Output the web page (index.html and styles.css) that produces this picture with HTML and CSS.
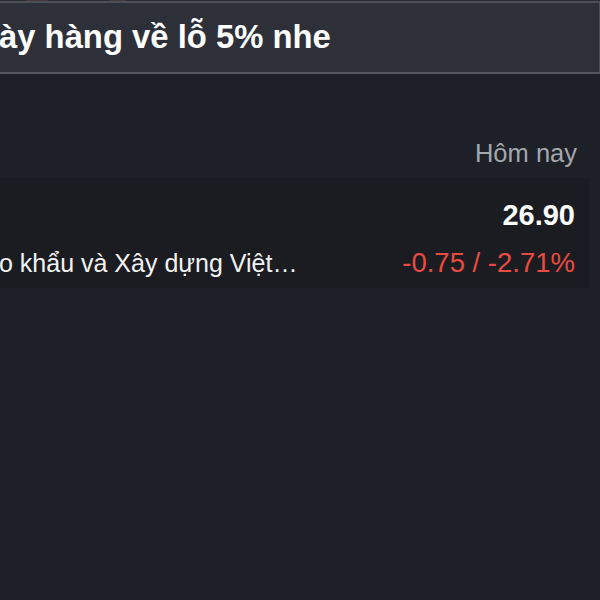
FILE: index.html
```html
<!DOCTYPE html>
<html lang="vi">
<head>
<meta charset="utf-8">
<link rel="stylesheet" href="styles.css">
</head>
<body>
  <div class="topstrip"><span class="mark mark-a"></span><span class="mark mark-b"></span></div>
  <header class="post-header">
    <h1 class="post-title">ày hàng về lỗ 5% nhe</h1>
  </header>
  <main class="content">
    <div class="col-label">Hôm nay</div>
    <div class="stock-row">
      <div class="line line-price">
        <span class="price">26.90</span>
      </div>
      <div class="line line-name">
        <span class="name">o khẩu và Xây dựng Việt…</span>
        <span class="change">-0.75 / -2.71%</span>
      </div>
    </div>
  </main>
</body>
</html>
```

FILE: styles.css
```css
html, body {
  margin: 0;
  padding: 0;
}
body {
  width: 600px;
  height: 600px;
  overflow: hidden;
  background: #1e2027;
  font-family: "Liberation Sans", Arial, sans-serif;
  color: #ffffff;
}
.topstrip {
  height: 1px;
  background: #2a2c33;
  display: flex;
}
.mark {
  display: block;
  height: 1px;
  background: #4a3538;
}
.mark-a { width: 22px; margin-left: 26px; }
.mark-b { width: 16px; margin-left: 62px; }
.post-header {
  height: 69px;
  background: #2d3039;
  border-top: 2px solid #4b4e56;
  border-bottom: 2px solid #53565e;
  border-right: 1px solid #4b4e56;
  display: flex;
  align-items: center;
}
.post-title {
  margin: -2px 0 0 -1px;
  font-size: 32.8px;
  font-weight: bold;
  line-height: 40px;
  color: #ffffff;
  white-space: nowrap;
}
.content {
  display: flex;
  flex-direction: column;
}
.col-label {
  padding: 64px 23px 10px 0;
  font-size: 25.5px;
  line-height: 30px;
  color: #a3a7ae;
  text-align: right;
}
.stock-row {
  width: 590px;
  height: 110px;
  box-sizing: border-box;
  padding: 20px 15px 0 0;
  background: #1a1c21;
}
.line {
  display: flex;
  line-height: 34px;
  white-space: nowrap;
}
.line-price {
  justify-content: flex-end;
}
.price {
  font-size: 29px;
  font-weight: bold;
  color: #ffffff;
}
.line-name {
  margin-top: 14px;
  justify-content: space-between;
  align-items: baseline;
}
.name {
  font-size: 25px;
  color: #f2f2f2;
  margin-left: -1px;
}
.change {
  font-size: 27.5px;
  color: #ea4a3f;
}
```
